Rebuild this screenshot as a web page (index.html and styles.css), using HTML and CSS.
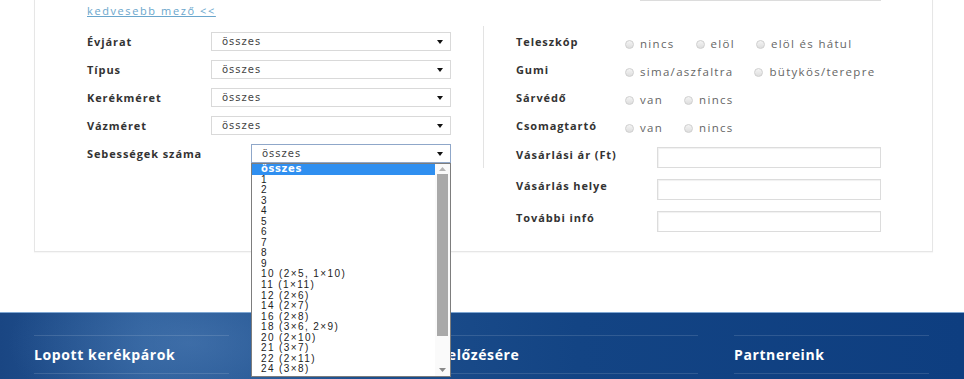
FILE: index.html
```html
<!DOCTYPE html>
<html lang="hu">
<head>
  <meta charset="UTF-8" />
  <title>Kerékpár adatlap</title>
  <link rel="stylesheet" href="styles.css">
</head>
<body>
  <div class="panel">
    <div class="top-row">
      <input type="text" class="text-input wide">
    </div>
    <a href="#" class="more-link">kedvesebb mező &lt;&lt;</a>

    <div class="cols">
      <div class="col-left">
        <div class="row">
          <span class="label">Évjárat</span>
          <div class="select"><span>összes</span><svg width="6" height="4" viewBox="0 0 6 4"><path d="M0 0h6L3 4z" fill="#111"/></svg></div>
        </div>
        <div class="row">
          <span class="label">Típus</span>
          <div class="select"><span>összes</span><svg width="6" height="4" viewBox="0 0 6 4"><path d="M0 0h6L3 4z" fill="#111"/></svg></div>
        </div>
        <div class="row">
          <span class="label">Kerékméret</span>
          <div class="select"><span>összes</span><svg width="6" height="4" viewBox="0 0 6 4"><path d="M0 0h6L3 4z" fill="#111"/></svg></div>
        </div>
        <div class="row">
          <span class="label">Vázméret</span>
          <div class="select"><span>összes</span><svg width="6" height="4" viewBox="0 0 6 4"><path d="M0 0h6L3 4z" fill="#111"/></svg></div>
        </div>
        <div class="row">
          <span class="label label-long">Sebességek száma</span>
          <div class="select select-open"><span>összes</span><svg width="6" height="4" viewBox="0 0 6 4"><path d="M0 0h6L3 4z" fill="#111"/></svg>
            <div class="dropdown">
              <ul class="options">
                <li class="active">összes</li>
                <li>1</li>
                <li>2</li>
                <li>3</li>
                <li>4</li>
                <li>5</li>
                <li>6</li>
                <li>7</li>
                <li>8</li>
                <li>9</li>
                <li>10 (2×5, 1×10)</li>
                <li>11 (1×11)</li>
                <li>12 (2×6)</li>
                <li>14 (2×7)</li>
                <li>16 (2×8)</li>
                <li>18 (3×6, 2×9)</li>
                <li>20 (2×10)</li>
                <li>21 (3×7)</li>
                <li>22 (2×11)</li>
                <li>24 (3×8)</li>
              </ul>
              <div class="scrollbar">
                <svg width="7" height="4" viewBox="0 0 7 4"><path d="M0 4L3.5 0 7 4z" fill="#b5b5b5"/></svg>
                <div class="thumb"></div>
                <svg width="7" height="4" viewBox="0 0 7 4"><path d="M0 0h7L3.5 4z" fill="#8a8a8a"/></svg>
              </div>
            </div>
          </div>
        </div>
      </div>

      <div class="col-right">
        <div class="divided">
          <div class="row radio-row">
            <span class="label">Teleszkóp</span>
            <div class="choices">
              <label class="choice"><span class="radio"></span>nincs</label>
              <label class="choice"><span class="radio"></span>elöl</label>
              <label class="choice"><span class="radio"></span>elöl és hátul</label>
            </div>
          </div>
          <div class="row radio-row">
            <span class="label">Gumi</span>
            <div class="choices">
              <label class="choice"><span class="radio"></span>sima/aszfaltra</label>
              <label class="choice"><span class="radio"></span>bütykös/terepre</label>
            </div>
          </div>
          <div class="row radio-row">
            <span class="label">Sárvédő</span>
            <div class="choices">
              <label class="choice"><span class="radio"></span>van</label>
              <label class="choice"><span class="radio"></span>nincs</label>
            </div>
          </div>
          <div class="row radio-row">
            <span class="label">Csomagtartó</span>
            <div class="choices">
              <label class="choice"><span class="radio"></span>van</label>
              <label class="choice"><span class="radio"></span>nincs</label>
            </div>
          </div>
          <div class="row input-row first">
            <span class="label">Vásárlási ár (Ft)</span>
            <input type="text" class="text-input">
          </div>
        </div>
        <div class="plain">
          <div class="row input-row">
            <span class="label">Vásárlás helye</span>
            <input type="text" class="text-input">
          </div>
          <div class="row input-row">
            <span class="label">További infó</span>
            <input type="text" class="text-input">
          </div>
        </div>
      </div>
    </div>
  </div>

  <footer class="footer">
    <div class="foot-col"><h3>Lopott kerékpárok</h3></div>
    <div class="foot-col mid"><h3>Tanácsok a lopások megelőzésére</h3></div>
    <div class="foot-col"><h3>Partnereink</h3></div>
  </footer>
</body>
</html>
```

FILE: styles.css
```css
* {
  box-sizing: border-box;
  margin: 0;
  padding: 0;
}

body {
  height: 379px;
  overflow: hidden;
  background: #fff;
  font-family: 'Open Sans', 'DejaVu Sans', sans-serif;
}

.panel {
  width: 899px;
  margin: -41px 0 0 34px;
  padding: 0 51px 19px 52px;
  border: 1px solid #e6e6e6;
  box-shadow: 0 1px 1px rgba(0, 0, 0, 0.03);
}

.top-row {
  height: 41px;
  display: flex;
  justify-content: flex-end;
  align-items: flex-end;
}

.text-input {
  display: block;
  width: 224px;
  height: 21px;
  border: 1px solid #dcdcdc;
  box-shadow: inset 1px 1px 1px rgba(0, 0, 0, 0.06);
  background: #fff;
  outline: none;
}

.text-input.wide {
  width: 241px;
  height: 22px;
}

.more-link {
  display: block;
  width: max-content;
  margin-top: 3px;
  font-size: 11px;
  line-height: 14px;
  letter-spacing: 1.6px;
  color: #6aa6cc;
  text-decoration: underline;
}

.cols {
  display: flex;
  gap: 32px;
  margin-top: 8px;
}

.col-left {
  width: 364px;
  padding-top: 6px;
  display: flex;
  flex-direction: column;
  gap: 9px;
}

.row {
  display: flex;
  align-items: center;
  height: 19px;
}

.label {
  width: 124px;
  flex-shrink: 0;
  font-size: 11px;
  font-weight: 700;
  letter-spacing: 0.9px;
  color: #333;
  line-height: 19px;
}

.label-long {
  width: 164px;
}

.select {
  position: relative;
  flex: 1;
  height: 19px;
  display: flex;
  align-items: center;
  justify-content: space-between;
  padding: 0 7px 0 10px;
  border: 1px solid #d9d9d9;
  background: #fff;
  font-family: 'DejaVu Sans', sans-serif;
  font-size: 10px;
  letter-spacing: 1px;
  color: #444;
}

.select-open {
  border-color: #8fa7c9;
}

.dropdown {
  position: absolute;
  top: 18px;
  left: -1px;
  right: -1px;
  height: 214px;
  z-index: 5;
  display: flex;
  background: #fff;
  border: 1px solid #7d7d7d;
}

.options {
  flex: 1;
  list-style: none;
  font-family: 'Liberation Sans', Arial, sans-serif;
  font-size: 10px;
  line-height: 10.55px;
  letter-spacing: 1.4px;
  color: #222;
}

.options li {
  padding-left: 9px;
}

.options li.active {
  background: #2f8ff0;
  color: #fff;
  font-family: 'DejaVu Sans', sans-serif;
  font-weight: 700;
  letter-spacing: 0.6px;
}

.scrollbar {
  width: 15px;
  display: flex;
  flex-direction: column;
  align-items: center;
  justify-content: space-between;
  padding: 3px 0 4px;
  background: #fafafa;
}

.thumb {
  width: 11px;
  flex: 1;
  margin: 3px 0 32px;
  background: #a9a9a9;
}

.col-right {
  width: 398px;
}

.divided {
  border-left: 1px solid #e3e3e3;
  padding: 6px 0 0 32px;
}

.plain {
  padding-left: 33px;
}

.radio-row {
  align-items: flex-start;
  margin-bottom: 9px;
}

.radio-row .label {
  width: 109px;
}

.choices {
  display: flex;
  gap: 21px;
  padding-top: 5px;
}

.choice {
  display: flex;
  align-items: center;
  gap: 6px;
  font-size: 11.5px;
  line-height: 14px;
  letter-spacing: 1.3px;
  color: #666;
}

.radio {
  width: 9px;
  height: 9px;
  border-radius: 50%;
  border: 1px solid #cfcfcf;
  background: linear-gradient(#f4f4f4, #dedede);
}

.input-row {
  height: 21px;
  align-items: flex-start;
  margin-top: 11px;
}

.input-row.first {
  margin-top: 12px;
}

.input-row .label {
  width: 141px;
  line-height: 13px;
  padding-top: 1px;
}

.plain .input-row .label {
  padding-top: 0;
}

.footer {
  margin-top: 60px;
  height: 80px;
  display: flex;
  gap: 36px;
  padding: 22px 35px 0 34px;
  border-top: 1px solid #7ea6d2;
  background:
    radial-gradient(ellipse 260px 120px at 190px 30px, rgba(90, 135, 190, 0.45), rgba(90, 135, 190, 0) 70%),
    linear-gradient(90deg, #1a4683 0%, #285a97 15%, #1c4d8b 40%, #134484 60%, #0e3e80 100%);
}

.foot-col {
  width: 195px;
}

.foot-col.mid {
  flex: 1;
}

.foot-col h3 {
  border-top: 1px solid rgba(255, 255, 255, 0.13);
  border-bottom: 1px solid rgba(255, 255, 255, 0.13);
  padding: 11px 0 10px;
  font-size: 14px;
  line-height: 16px;
  font-weight: 700;
  letter-spacing: 0.6px;
  color: #fff;
}
```
